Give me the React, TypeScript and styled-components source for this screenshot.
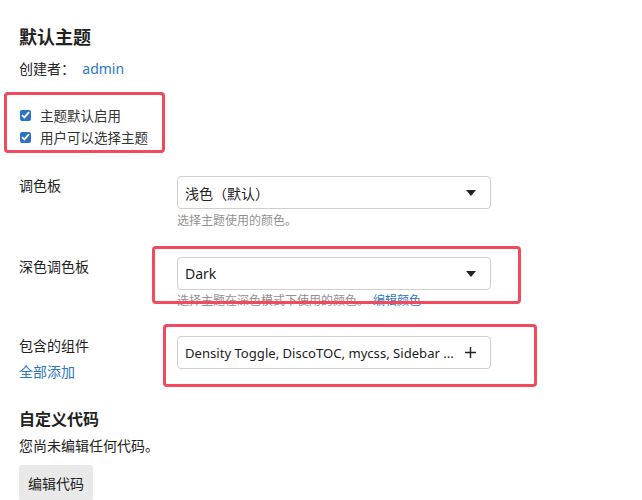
import React from "react";
import styled, { createGlobalStyle } from "styled-components";

const GlobalStyle = createGlobalStyle`
  html, body {
    margin: 0;
    padding: 0;
    background: #fff;
    overflow: hidden;
  }
  body {
    font-family: "Noto Sans", "Noto Sans CJK SC", sans-serif;
    color: #222;
  }
`;

const Page = styled.div`
  width: 642px;
  height: 500px;
  overflow: hidden;
  padding: 0 19px;
  box-sizing: border-box;
`;

const BackLink = styled.a`
  display: block;
  margin-top: -14px;
  margin-left: 10px;
  height: 16px;
  font-size: 11px;
  line-height: 16px;
  color: #2a78c0;
  text-decoration: underline;
`;

const Heading = styled.h2<{ $size: number; $top: number }>`
  margin: ${(p) => p.$top}px 0 0;
  font-size: ${(p) => p.$size}px;
  line-height: 22px;
  font-weight: 700;
  color: #222;
`;

const Text = styled.div<{ $top: number }>`
  margin-top: ${(p) => p.$top}px;
  font-size: 14px;
  line-height: 20px;
`;

const Link = styled.a`
  color: #2a78c0;
  text-decoration: none;
  cursor: pointer;
`;

const Annotated = styled.div`
  position: relative;
  padding-top: 25px;
`;

// red annotation box drawn over the screenshot
const Highlight = styled.div<{ $t: number; $l: number; $w: number; $h: number }>`
  position: absolute;
  top: ${(p) => p.$t}px;
  left: ${(p) => p.$l}px;
  width: ${(p) => p.$w}px;
  height: ${(p) => p.$h}px;
  box-sizing: border-box;
  border: 3px solid #f24a5c;
  border-radius: 4px;
  pointer-events: none;
`;

const CheckGroup = styled.div`
  display: flex;
  flex-direction: column;
`;

const CheckRow = styled.label`
  display: flex;
  align-items: center;
  gap: 9px;
  height: 22px;
  font-size: 13.5px;
  color: #333;
  padding-left: 1px;
`;

const Box = styled.span`
  width: 11px;
  height: 11px;
  border-radius: 2px;
  background: #2c72c2;
  display: flex;
  align-items: center;
  justify-content: center;
`;

const FormRow = styled.div<{ $top: number }>`
  margin-top: ${(p) => p.$top}px;
  display: grid;
  grid-template-columns: 158px 314px;
`;

const Label = styled.div`
  font-size: 14px;
  line-height: 20px;
  color: #222;
`;

const SubLink = styled(Link)`
  display: block;
  margin-top: 6px;
  font-size: 14px;
  line-height: 20px;
`;

const Control = styled.div`
  position: relative;
`;

const Select = styled.div`
  height: 33px;
  box-sizing: border-box;
  border: 1px solid #cfcfcf;
  border-radius: 4px;
  background: #fff;
  display: flex;
  align-items: center;
  gap: 8px;
  padding: 0 14px 0 7px;
  font-size: 14px;
  color: #222;
`;

const SelectValue = styled.span<{ $small?: boolean }>`
  flex: 1;
  min-width: 0;
  white-space: nowrap;
  overflow: hidden;
  font-size: ${(p) => (p.$small ? "13.1px" : "14px")};
`;

const Help = styled.div<{ $top: number }>`
  margin-top: ${(p) => p.$top}px;
  font-size: 12px;
  line-height: 18px;
  color: #919191;
  white-space: nowrap;
`;

const HelpLink = styled(Link)`
  margin-left: 4px;
`;

const Button = styled.button`
  margin-top: 9px;
  height: 36px;
  padding: 0 9px;
  border: none;
  border-radius: 3px;
  background: #e9e9e9;
  font-family: "Noto Sans", "Noto Sans CJK SC", sans-serif;
  font-size: 14px;
  color: #222;
`;

const Caret = () => (
  <svg width="10" height="6" viewBox="0 0 10 6">
    <path d="M0 0 L10 0 L5 6 Z" fill="#222" />
  </svg>
);

const Plus = () => (
  <svg width="11" height="11" viewBox="0 0 11 11">
    <path d="M5.5 0 V11 M0 5.5 H11" stroke="#222" strokeWidth="1.4" />
  </svg>
);

const Check = () => (
  <svg width="9" height="8" viewBox="0 0 9 8">
    <path d="M1 4.2 L3.4 6.4 L8 1.2" stroke="#fff" strokeWidth="1.8" fill="none" />
  </svg>
);

export default function App() {
  return (
    <>
      <GlobalStyle />
      <Page>
        <BackLink>返回主题</BackLink>
        <Heading $size={18} $top={24}>
          默认主题
        </Heading>
        <Text $top={11}>
          创建者：&nbsp; <Link>admin</Link>
        </Text>

        <Annotated>
          <CheckGroup>
            <CheckRow>
              <Box>
                <Check />
              </Box>
              主题默认启用
            </CheckRow>
            <CheckRow>
              <Box>
                <Check />
              </Box>
              用户可以选择主题
            </CheckRow>
          </CheckGroup>
          <Highlight $t={13} $l={-15} $w={161} $h={61} />
        </Annotated>

        <FormRow $top={28}>
          <Label>调色板</Label>
          <Control>
            <Select>
              <SelectValue>浅色（默认）</SelectValue>
              <Caret />
            </Select>
            <Help $top={3}>选择主题使用的颜色。</Help>
          </Control>
        </FormRow>

        <FormRow $top={27}>
          <Label>深色调色板</Label>
          <Control>
            <Select>
              <SelectValue>Dark</SelectValue>
              <Caret />
            </Select>
            <Help $top={2}>
              选择主题在深色模式下使用的颜色。
              <HelpLink>编辑颜色</HelpLink>
            </Help>
            <Highlight $t={-11} $l={-25} $w={369} $h={58} />
          </Control>
        </FormRow>

        <FormRow $top={26}>
          <div>
            <Label>包含的组件</Label>
            <SubLink>全部添加</SubLink>
          </div>
          <Control>
            <Select>
              <SelectValue $small>Density Toggle, DiscoTOC, mycss, Sidebar ...</SelectValue>
              <Plus />
            </Select>
            <Highlight $t={-12} $l={-14} $w={374} $h={63} />
          </Control>
        </FormRow>

        <Heading $size={16} $top={26}>
          自定义代码
        </Heading>
        <Text $top={6}>您尚未编辑任何代码。</Text>
        <Button>编辑代码</Button>
      </Page>
    </>
  );
}
